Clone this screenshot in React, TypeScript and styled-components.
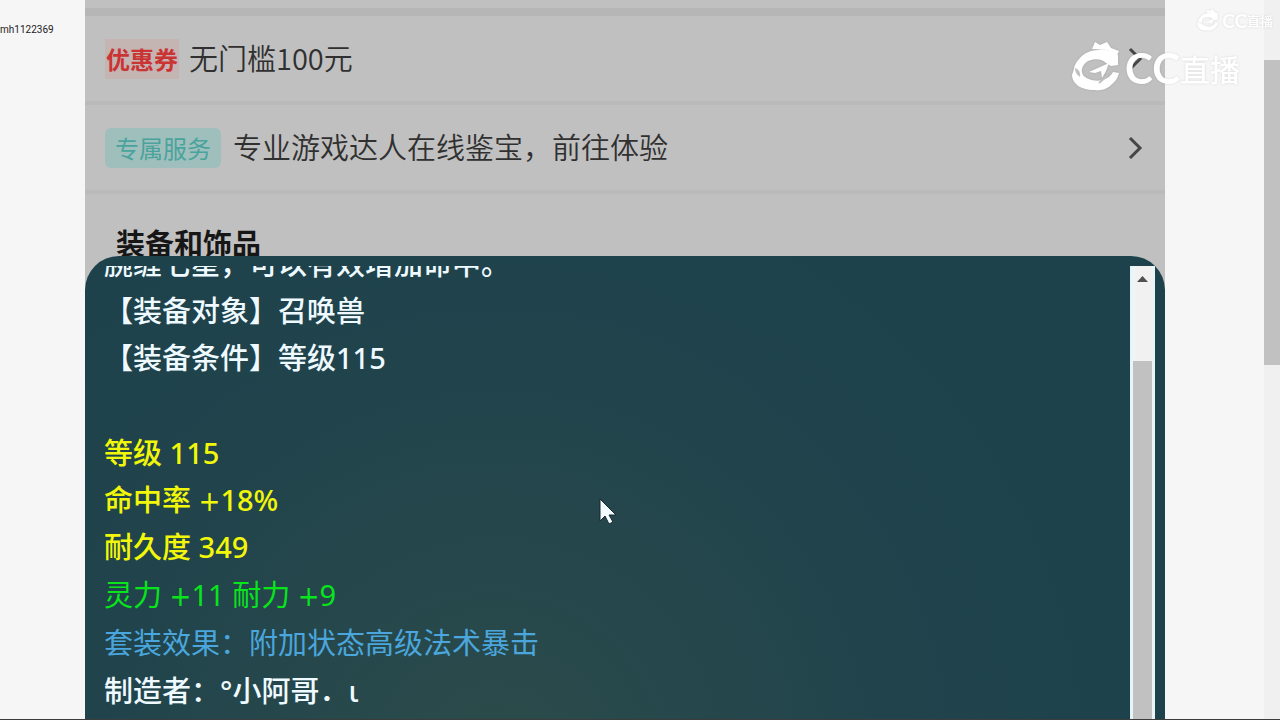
import React from "react";
import styled, { createGlobalStyle } from "styled-components";

const Global = createGlobalStyle`
  * { box-sizing: border-box; }
  body { margin: 0; background: #f6f6f6; font-family: "Noto Sans", "Noto Sans CJK SC", sans-serif; }
  h2, p { margin: 0; }
`;

const Screen = styled.div`
  position: relative;
  display: flex;
  height: 100vh;
  overflow: hidden;
  border-bottom: 1px solid #3c3c3c;
`;

const Rail = styled.aside<{ $width: number }>`
  flex: 0 0 ${(p) => p.$width}px;
  padding-top: 22px;
  white-space: nowrap;
  font: 10px/16px Roboto, sans-serif;
  color: #222;
`;

const Page = styled.main`
  position: relative;
  flex: 1;
  min-width: 0;
  overflow: hidden;
  background: #c0c0c0;
  border-top: 8px solid #c0c0c0;
`;

const Divider = styled.div<{ $thick?: boolean }>`
  height: ${(p) => (p.$thick ? 8 : 4)}px;
  background: ${(p) => (p.$thick ? "#b6b6b6" : "#bababa")};
`;

const LinkRow = styled.a`
  display: flex;
  align-items: center;
  height: 85px;
  padding: 0 19px 0 20px;
  font-size: 29px;
  line-height: 40px;
  color: #303030;
  text-decoration: none;
  white-space: nowrap;
`;

const Label = styled.span`
  font-family: "Noto Sans CJK SC", sans-serif;
  font-weight: 350;
  padding-bottom: 3px;
`;

const Tag = styled.span<{ $tone: "red" | "teal" }>`
  flex: none;
  margin-right: ${(p) => (p.$tone === "red" ? 10 : 12)}px;
  padding: ${(p) => (p.$tone === "red" ? "0 1px" : "0 10px")};
  border-radius: ${(p) => (p.$tone === "red" ? 0 : 6)}px;
  font-family: "Noto Sans CJK SC", sans-serif;
  font-size: 24px;
  line-height: 40px;
  font-weight: ${(p) => (p.$tone === "red" ? 700 : 400)};
  color: ${(p) => (p.$tone === "red" ? "#cb3434" : "#4aa39c")};
  background: ${(p) => (p.$tone === "red" ? "#c4b4b2" : "#9fbfbc")};
`;

const Chevron = styled.svg`
  flex: none;
  margin-left: auto;
  width: 24px;
  height: 24px;
  fill: none;
  stroke: #464646;
  stroke-width: 3;
`;

const Heading = styled.h2`
  padding: 29px 31px 0;
  font-size: 29px;
  line-height: 42px;
  font-weight: 700;
  color: #161616;
`;

const Sheet = styled.section`
  position: absolute;
  inset: 248px 0 0;
  display: flex;
  padding: 10px 10px 0 19px;
  border-radius: 34px 34px 0 0;
  overflow: hidden;
  background: radial-gradient(circle at 38% 110%, #2c4b4a 0, #26484c 24%, #20434c 50%, #1e424b 75%);
`;

const Details = styled.div`
  flex: 1;
  display: flex;
  flex-direction: column;
  justify-content: flex-start;
  gap: 1px;
  min-height: 0;
  overflow: hidden;
  font-size: 29px;
  line-height: 47px;
  white-space: nowrap;
`;

const Group = styled.div<{ $color: string; $light?: boolean }>`
  flex: none;
  color: ${(p) => p.$color};
  font-weight: ${(p) => (p.$light ? 400 : 500)};
  &:first-child { margin-top: -26px; padding-bottom: 47px; }
`;

const Line = styled.p``;

const Plus = styled.span`
  font-family: "DejaVu Sans Condensed", "DejaVu Sans", sans-serif;
  font-weight: 400;
  line-height: 1;
`;

const SheetScroll = styled.div`
  flex: 0 0 25px;
  display: flex;
  flex-direction: column;
  padding: 0 3px;
  background: linear-gradient(90deg, #dff4fa 0, #f1f6f7 4px, #f1f1f1 6px, #f1f1f1 20px, #e8f6fa 25px);
`;

const ScrollArrow = styled.svg`
  flex: none;
  width: 19px;
  height: 95px;
  fill: #505050;
`;

const Thumb = styled.div`
  flex: 1;
  background: #c1c1c1;
`;

const WindowScroll = styled.div`
  flex: 0 0 16px;
  padding-top: 60px;
  background: #f0f0f0;
`;

const WindowThumb = styled.div`
  height: 305px;
  background: #c1c1c1;
`;

const Brand = styled.div<{ $small?: boolean }>`
  position: absolute;
  top: ${(p) => (p.$small ? 9 : 41)}px;
  right: ${(p) => (p.$small ? 7 : 40)}px;
  display: flex;
  align-items: center;
  color: #fff;
  font: 500 ${(p) => (p.$small ? 13 : 30)}px/1 "Noto Sans CJK SC", sans-serif;
  white-space: nowrap;
  filter: drop-shadow(0 0 1px rgba(0, 0, 0, 0.12));
  svg {
    width: ${(p) => (p.$small ? 22 : 50)}px;
    height: ${(p) => (p.$small ? 22 : 50)}px;
    margin-right: ${(p) => (p.$small ? 3 : 4)}px;
  }
  span { padding-top: ${(p) => (p.$small ? 1 : 4)}px; }
`;

const BrandLatin = styled.span<{ $small?: boolean }>`
  font: 700 ${(p) => (p.$small ? 19 : 42)}px/1 Lato, sans-serif;
`;

const Cursor = styled.svg`
  position: absolute;
  left: 599px;
  top: 498px;
  width: 18px;
  height: 28px;
`;

const Arrow = () => (
  <Chevron viewBox="0 0 24 24"><path d="M8 2l10 10L8 22" /></Chevron>
);

const Logo = ({ small }: { small?: boolean }) => (
  <Brand $small={small}>
    <svg viewBox="0 0 50 50">
      <path fill="#fff" d="M47 14C42 10 35 8 28 9C20 9 13 12 9 17C5 21 3 25 3 28L1 34C1 38 3 41 5 43C9 47 16 49 24 49C32 50 37 47 40 44C44 41 47 37 48 32L42 31C40 35 36 38 31 39C24 41 15 38 12 34C9 29 12 23 17 20C24 17 32 18 35 22L40 25L47 24Z" />
      <path fill="#fff" d="M21 8L24 1L29 4L36 1L40 7L48 10L46 14L36 9ZM18 31L38 22L35 30L31 37L30 30L24 32Z" />
      <path stroke={small ? "#f0f0f0" : "#c0c0c0"} strokeWidth="2" d="M37 34L28 42" />
      <path fill={small ? "#f0f0f0" : "#c0c0c0"} d="M4 27Q10 29 9 36Q4 33 4 27Z" />
    </svg>
    <BrandLatin $small={small}>CC</BrandLatin>
    <span>直播</span>
  </Brand>
);

export default function App() {
  return (
    <>
      <Global />
      <Screen>
        <Rail $width={85}>mh1122369</Rail>
        <Page>
          <Divider $thick />
          <LinkRow href="#coupon"><Tag $tone="red">优惠券</Tag><Label>无门槛100元</Label><Arrow /></LinkRow>
          <Divider />
          <LinkRow href="#service"><Tag $tone="teal">专属服务</Tag><Label>专业游戏达人在线鉴宝，前往体验</Label><Arrow /></LinkRow>
          <Divider />
          <Heading>装备和饰品</Heading>
          <Sheet>
            <Details>
              <Group $color="#eefaff">
                <Line>腕缠七星，可以有效增加命中。</Line>
                <Line>【装备对象】召唤兽</Line>
                <Line>【装备条件】等级115</Line>
              </Group>
              <Group $color="#f2f70a">
                <Line>等级 115</Line>
                <Line>命中率 <Plus>+</Plus>18%</Line>
                <Line>耐久度 349</Line>
              </Group>
              <Group $color="#08e51a" $light>
                <Line>灵力 <Plus>+</Plus>11 耐力 <Plus>+</Plus>9</Line>
              </Group>
              <Group $color="#4aa6dc" $light>
                <Line>套装效果：附加状态高级法术暴击</Line>
              </Group>
              <Group $color="#eefaff">
                <Line>制造者：°小阿哥．ι</Line>
              </Group>
            </Details>
            <SheetScroll>
              <ScrollArrow viewBox="0 0 19 95"><path d="M4 16L9.500 10L15 16Z" /></ScrollArrow>
              <Thumb />
            </SheetScroll>
          </Sheet>
        </Page>
        <Rail $width={99} />
        <WindowScroll><WindowThumb /></WindowScroll>
        <Logo />
        <Logo small />
        <Cursor viewBox="0 0 18 28"><path d="M1 1V23L6 18L10 26L14 24L10 17H17Z" fill="#f4fbff" stroke="#18282e" /></Cursor>
      </Screen>
    </>
  );
}
